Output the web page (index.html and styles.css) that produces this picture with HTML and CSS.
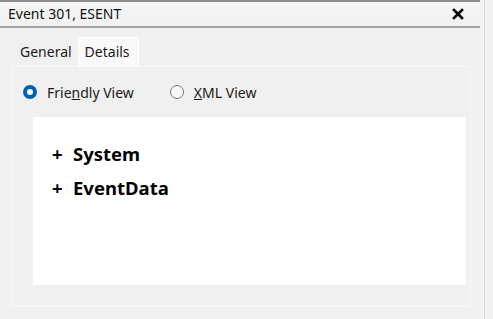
FILE: index.html
```html
<!DOCTYPE html>
<html>
<head>
<meta charset="utf-8">
<link rel="stylesheet" href="styles.css">
</head>
<body>
<div class="screen">
  <div class="frame">
    <div class="titlebar">
      <span class="title">Event 301, ESENT</span>
      <svg class="close" width="12" height="12" viewBox="0 0 12 12"><path d="M2 2 L10 10 M10 2 L2 10" stroke="#000" stroke-width="2.6" stroke-linecap="square"/></svg>
    </div>
    <div class="body">
      <div class="tabs">
        <div class="tab">General</div>
        <div class="tab active">Details</div>
      </div>
      <div class="panel">
        <div class="radios">
          <label class="radio"><span class="dot on"></span><span>Frie<u>n</u>dly View</span></label>
          <label class="radio"><span class="dot"></span><span><u>X</u>ML View</span></label>
        </div>
        <div class="viewer">
          <div class="node"><span class="plus">+</span>System</div>
          <div class="node"><span class="plus">+</span>EventData</div>
        </div>
      </div>
    </div>
  </div>
</div>
</body>
</html>
```
FILE: styles.css
```css
html, body {
  margin: 0;
  padding: 0;
}
body {
  background: #f0f0f0;
  font-family: "Noto Sans", "Segoe UI", sans-serif;
  color: #1a1a1a;
}
.screen {
  width: 493px;
  height: 319px;
  overflow: hidden;
  display: flex;
}
.frame {
  width: 485px;
  height: 319px;
  border-right: 1px solid #dadada;
  box-sizing: border-box;
  display: flex;
  flex-direction: column;
}
.titlebar {
  height: 28px;
  box-sizing: border-box;
  border-top: 2px solid #8c8c8c;
  border-bottom: 2px solid #a4a4a4;
  margin-right: 4px;
  background: linear-gradient(#f6f6f6, #f1f1f1);
  display: flex;
  align-items: center;
  justify-content: space-between;
  padding: 0 16px 0 8px;
}
.title {
  font-size: 14px;
  line-height: 1;
  color: #111;
}
.close {
  display: block;
}
.body {
  flex: 1;
  padding: 9px 13px 12px 12px;
  display: flex;
  flex-direction: column;
}
.tabs {
  display: flex;
  height: 29px;
  padding-left: 4px;
  align-items: flex-end;
}
.tab {
  font-size: 14px;
  padding: 0 4px 5px 4px;
  color: #1a1a1a;
}
.tab.active {
  background: #f9f9f9;
  height: 29px;
  box-sizing: border-box;
  padding: 4px 8px 0 6px;
  margin-left: 2px;
  border: 1px solid #fbfbfb;
  border-bottom: none;
}
.panel {
  flex: 1;
  border: 1px solid #f8f8f8;
  background: #f0f0f0;
  display: flex;
  flex-direction: column;
  padding: 0 4px 21px 20px;
}
.radios {
  display: flex;
  height: 50px;
  align-items: center;
  margin-left: -10px;
  gap: 36px;
}
.radio {
  display: flex;
  align-items: center;
  font-size: 14px;
  color: #1a1a1a;
  gap: 10px;
}
.dot {
  width: 14px;
  height: 14px;
  border-radius: 50%;
  box-sizing: border-box;
  border: 1px solid #777;
  background: #f7f7f7;
}
.dot.on {
  border: 4px solid #005fb8;
  background: #fff;
}
.viewer {
  flex: 1;
  background: #fff;
  padding: 20px 0 0 19px;
}
.node {
  font-size: 18.5px;
  font-weight: bold;
  color: #000;
  line-height: 34px;
  display: flex;
}
.plus {
  width: 21px;
  font-weight: bold;
}
```
